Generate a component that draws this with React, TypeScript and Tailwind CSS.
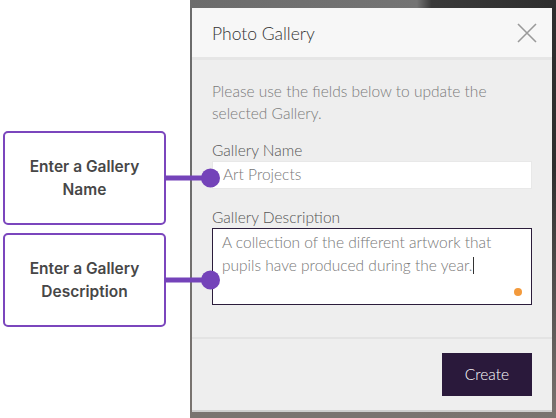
function Callout({ lines }: { lines: string[] }) {
  return (
    <div className="relative flex h-[94px] w-[163px] flex-col items-center justify-center rounded-[5px] border-2 border-[#7b46bd] bg-white text-center font-['Inter',sans-serif] text-[15.5px] font-semibold leading-[23px] text-[#474747]">
      {lines.map((l) => (
        <span key={l}>{l}</span>
      ))}
      {/* connector to the field */}
      <div className="absolute left-[160px] top-1/2 flex -translate-y-1/2 items-center">
        <div className="h-[5px] w-[38px] bg-[#7443b9]" />
        <div className="-ml-[2px] h-[19px] w-[19px] rounded-full bg-[#7443b9]" />
      </div>
    </div>
  );
}

export default function App() {
  return (
    <div className="flex h-[418px] w-[556px] overflow-hidden bg-white">
      {/* annotations */}
      <div className="relative z-10 flex w-[190px] flex-col gap-[8px] pl-[3px] pt-[131px]">
        <Callout lines={["Enter a Gallery", "Name"]} />
        <Callout lines={["Enter a Gallery", "Description"]} />
      </div>

      {/* blurred page behind the modal */}
      <div className="flex flex-1 bg-[linear-gradient(180deg,transparent_0%,transparent_40%,#7a7470_100%),linear-gradient(90deg,#6c6c6c_0%,#747474_62%,#3a3a3a_66%,#2e2e2e_100%)] pb-[6px] pl-[2px] pr-[4px] pt-[8px]">
        <div className="flex flex-1 flex-col border-b-2 border-[#cfcfcf] bg-[#eeeeee] font-['Lato',sans-serif]">
          <div className="flex h-[52px] items-center justify-between border-b-[3px] border-[#e6e6e6] bg-[#f7f7f7] pl-[20px] pr-[15px] pt-[4px]">
            <span className="text-[17.5px] font-light text-[#333]">Photo Gallery</span>
            <svg width="20" height="20" viewBox="0 0 20 20" className="-mt-[3px] text-[#9a9a9a]">
              <path d="M1 1L19 19M19 1L1 19" stroke="currentColor" strokeWidth="1.6" fill="none" />
            </svg>
          </div>

          <div className="flex flex-1 flex-col border-b-2 border-[#e3e3e3] px-[20px] pt-[20px]">
            <p className="text-[15.5px] font-light leading-[22px] text-[#7a7a7a]">
              Please use the fields below to update the selected Gallery.
            </p>
            <label className="mt-[15px] text-[15.5px] font-light leading-[22px] text-[#555]">Gallery Name</label>
            <div className="flex h-[28px] items-center border border-[#e8e8e8] bg-white pl-[10px] text-[15.5px] font-light text-[#777]">
              Art Projects
            </div>
            <label className="mt-[17px] text-[15.5px] font-light leading-[22px] text-[#555]">Gallery Description</label>
            <div className="relative h-[77px] border border-[#2b1d3b] bg-white px-[9px] pt-[2px] text-[15.5px] font-light leading-[23px] text-[#777]">
              A collection of the different artwork that pupils have produced during the year.
              <span className="ml-px inline-block h-[17px] w-px translate-y-[3px] bg-[#333]" />
              <span className="absolute bottom-[8px] right-[9px] h-[8px] w-[8px] rounded-full bg-[#f39a3c]" />
            </div>
          </div>

          <div className="flex h-[71px] items-center justify-end pr-[20px]">
            <button className="h-[43px] w-[90px] bg-[#2a193b] text-[15.5px] font-light text-white">Create</button>
          </div>
        </div>
      </div>
    </div>
  );
}
